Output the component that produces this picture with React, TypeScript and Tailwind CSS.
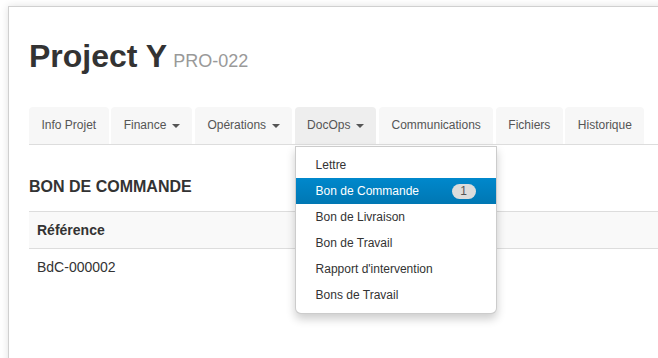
import React from 'react';

const TABS = [
    { label: 'Info Projet' },
    { label: 'Finance', caret: true },
    { label: 'Opérations', caret: true },
    { label: 'DocOps', caret: true, active: true },
    { label: 'Communications' },
    { label: 'Fichiers' },
    { label: 'Historique' },
];

const DOC_ITEMS = [
    { label: 'Lettre' },
    { label: 'Bon de Commande', badge: 1, selected: true },
    { label: 'Bon de Livraison' },
    { label: 'Bon de Travail' },
    { label: "Rapport d'intervention" },
    { label: 'Bons de Travail' },
];

function Caret() {
    return (
        <span className="inline-block w-0 h-0 ml-[5.5px] align-middle border-t-[4px] border-t-[#555] border-x-[4px] border-x-transparent" />
    );
}

function DocOpsMenu() {
    return (
        <ul className="absolute left-0 top-full mt-[2px] z-10 w-[202px] py-[5px] bg-white border border-black/20 rounded-b-md shadow-[0_5px_10px_rgba(0,0,0,0.2)]">
            {DOC_ITEMS.map((item) => (
                <li
                    key={item.label}
                    className={
                        item.selected
                            ? 'flex items-center justify-between px-5 py-[3px] leading-5 text-xs text-white bg-gradient-to-b from-[#0088cc] to-[#0077b3]'
                            : 'flex items-center justify-between px-5 py-[3px] leading-5 text-xs text-[#333]'
                    }
                >
                    <span>{item.label}</span>
                    {item.badge && (
                        <span className="w-[24px] h-[15px] rounded-full bg-[#dcdcdc] text-[#555] text-[12px] leading-[15px] text-center">
                            {item.badge}
                        </span>
                    )}
                </li>
            ))}
        </ul>
    );
}

export default function App() {
    return (
        <div className="w-[658px] h-[358px] overflow-hidden bg-white pl-2 pt-[6px] font-['Liberation_Sans',Arial,sans-serif]">
            <div className="w-[720px] h-[420px] bg-white border border-[#d0d0d0] shadow-[0_0_8px_rgba(0,0,0,0.12)] pl-5 pt-[32px]">

                {/* Header */}
                <h1 className="flex items-baseline text-[32px] leading-[35px] font-bold text-[#333]">
                    Project Y
                    <small className="ml-[6px] text-[18px] font-normal text-[#999]">PRO-022</small>
                </h1>

                {/* Tabs */}
                <ul className="mt-[28px] flex gap-[2.5px] border-b border-[#ddd]">
                    {TABS.map((tab) => (
                        <li
                            key={tab.label}
                            className={
                                tab.active
                                    ? 'relative px-[12.5px] py-[10px] leading-[17px] text-xs text-[#555] bg-[#eee] rounded-t-[4px]'
                                    : 'relative px-[12.5px] py-[10px] leading-[17px] text-xs text-[#555] bg-[#f7f7f7] rounded-t-[4px]'
                            }
                        >
                            {tab.label}
                            {tab.caret && <Caret />}
                            {tab.active && <DocOpsMenu />}
                        </li>
                    ))}
                </ul>

                {/* Section */}
                <h2 className="mt-[32px] text-base leading-5 font-bold text-[#333]">BON DE COMMANDE</h2>

                <table className="mt-[14px] w-full text-sm leading-5 text-[#333] border-collapse">
                    <thead>
                        <tr className="bg-[#f9f9f9] border-y border-[#ddd]">
                            <th className="px-2 py-2 text-left font-bold">Référence</th>
                        </tr>
                    </thead>
                    <tbody>
                        <tr>
                            <td className="px-2 py-2">BdC-000002</td>
                        </tr>
                    </tbody>
                </table>
            </div>
        </div>
    );
}
